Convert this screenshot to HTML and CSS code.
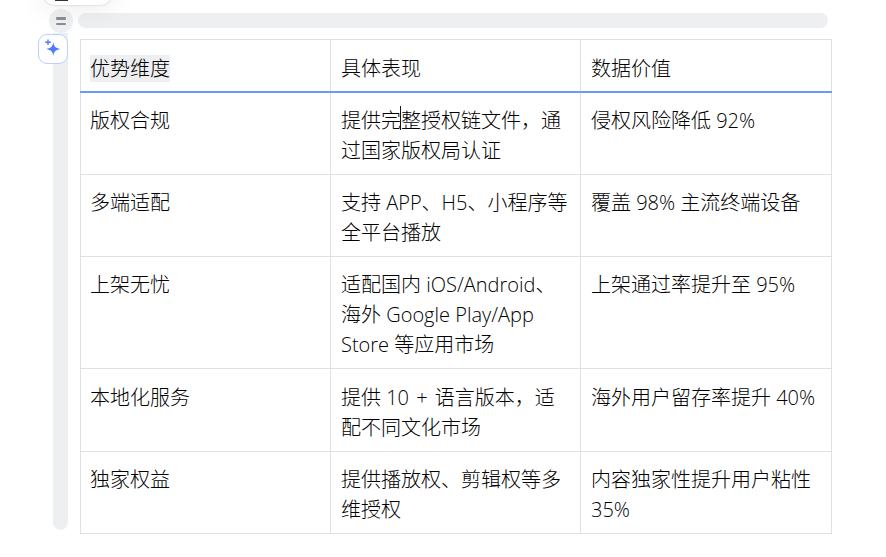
FILE: index.html
```html
<!DOCTYPE html>
<html lang="zh-CN">
<head>
<meta charset="utf-8">
<title>优势维度</title>
<link rel="stylesheet" href="styles.css">
</head>
<body>
<div class="popup"><span class="popup-mark"></span></div>
<div class="toprow">
  <div class="handle"><span class="handle-line"></span><span class="handle-line"></span></div>
  <div class="topbar"></div>
</div>
<div class="content">
  <div class="railcol">
    <div class="rail"></div>
    <button class="spark" aria-label="AI">
      <svg width="20" height="20" viewBox="0 0 20 20"><path d="M10.3 3 C10.9 7.4 12.2 8.9 17.3 10 C12.2 11.1 10.9 12.6 10.3 17 C9.7 12.6 8.4 11.1 3.3 10 C8.4 8.9 9.7 7.4 10.3 3Z" fill="#4d7dfb"/><path d="M5 .4 V6 M2.2 3.2 H7.8" stroke="#4d7dfb" stroke-width="1.4"/></svg>
    </button>
  </div>
  <table class="grid">
    <colgroup><col class="c1"><col class="c2"><col class="c3"></colgroup>
    <thead>
      <tr><th><span class="mark">优势维度</span></th><th>具体表现</th><th>数据价值</th></tr>
    </thead>
    <tbody>
      <tr><td>版权合规</td><td>提供完<span class="caret"></span>整授权链文件，通过国家版权局认证</td><td>侵权风险降低 92%</td></tr>
      <tr><td>多端适配</td><td>支持 APP、H5、小程序等全平台播放</td><td>覆盖 98% 主流终端设备</td></tr>
      <tr><td>上架无忧</td><td>适配国内 iOS/Android、海外 Google Play/App Store 等应用市场</td><td>上架通过率提升至 95%</td></tr>
      <tr class="row-tall"><td>本地化服务</td><td>提供 <span class="wide">10 + </span>语言版本，适配不同文化市场</td><td>海外用户留存率提升 40%</td></tr>
      <tr><td>独家权益</td><td>提供播放权、剪辑权等多维授权</td><td>内容独家性提升用户粘性 35%</td></tr>
    </tbody>
  </table>
</div>
</body>
</html>
```
FILE: styles.css
```css
html, body { margin: 0; padding: 0; background: #fff; }
body {
  width: 886px;
  height: 557px;
  overflow: hidden;
  position: relative;
  font-family: "Open Sans", "Noto Sans CJK SC", sans-serif;
  color: #000;
}
.popup {
  position: absolute;
  left: 43px;
  top: -20px;
  width: 69px;
  height: 25px;
  background: #fff;
  border-radius: 0 0 12px 12px;
  box-shadow: 0 0 2px rgba(0,0,0,.25), 0 0 30px rgba(0,0,0,.1);
}
.popup-mark {
  position: absolute;
  left: 12px;
  bottom: 4px;
  width: 13px;
  height: 2px;
  background: #333;
}
.toprow {
  display: flex;
  align-items: flex-start;
  gap: 5px;
  padding: 9px 0 0 49px;
}
.handle {
  width: 24px;
  height: 24px;
  border-radius: 50%;
  background: #eeeff1;
  display: flex;
  flex-direction: column;
  align-items: center;
  justify-content: center;
  gap: 3px;
}
.handle-line {
  width: 10px;
  height: 2.5px;
  border-radius: 1px;
  background: #8a8d93;
}
.topbar {
  width: 750px;
  height: 15px;
  margin-top: 4px;
  border-radius: 8px;
  background: #eeeff1;
}
.content { display: flex; }
.railcol {
  position: relative;
  width: 80px;
  flex: none;
}
.rail {
  margin-left: 53px;
  width: 15px;
  height: 497px;
  border-radius: 0 0 8px 8px;
  background: #eeeff1;
}
.spark {
  position: absolute;
  left: 38px;
  top: 1px;
  width: 30px;
  height: 30px;
  padding: 0;
  box-sizing: border-box;
  border: 1.5px solid #b8d0fb;
  border-radius: 9px;
  background: #fff;
  display: flex;
  align-items: center;
  justify-content: center;
}
.grid {
  margin-top: 6px;
  width: 752px;
  table-layout: fixed;
  border-collapse: collapse;
  font-size: 20px;
  line-height: 30px;
  font-weight: 300;
}
.c1, .c2 { width: 250px; }
.grid th, .grid td {
  border: 1px solid #dfe0e4;
  padding: 13px 10px 8px 10px;
  text-align: left;
  vertical-align: top;
  font-weight: 300;
}
.grid th:first-child, .grid td:first-child { padding-left: 9px; }
.grid th { border-bottom: 2px solid #6b9bf8; padding-top: 14px; padding-bottom: 7px; }
.mark {
  display: inline-block;
  line-height: 27px;
  background: #eeeff1;
}
.row-tall td { padding-top: 14px; }
.wide { word-spacing: 2px; }
.caret { position: relative; }
.caret::before {
  content: "";
  position: absolute;
  left: -1px;
  top: -1px;
  height: 24px;
  width: 1px;
  background: #14171c;
}
```
